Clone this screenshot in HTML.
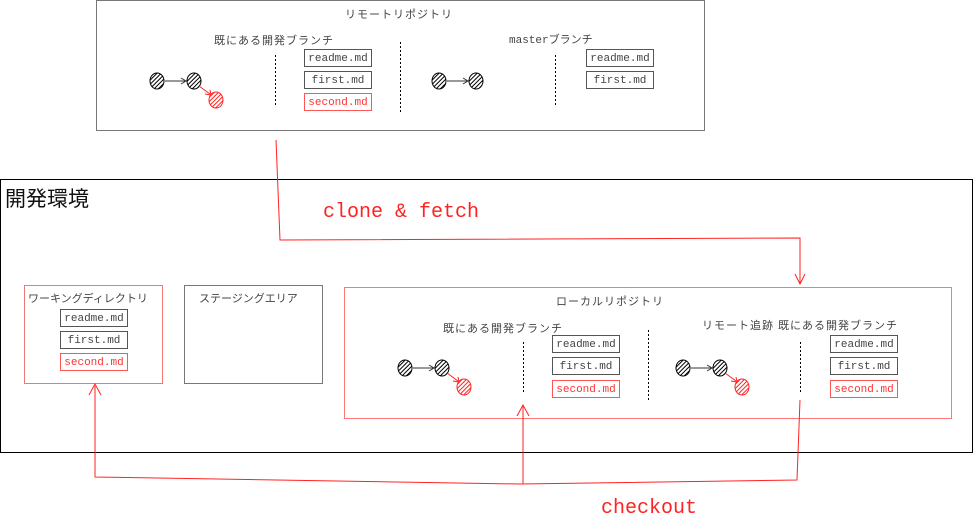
<!DOCTYPE html>
<html><head><meta charset="utf-8"><style>
body{margin:0;width:973px;height:522px;background:#fff;position:relative;overflow:hidden;font-family:"Liberation Sans","Noto Sans CJK JP",sans-serif;color:#444}
.a{position:absolute}
.box{position:absolute;box-sizing:border-box}
.f{position:absolute;width:68px;height:18px;box-sizing:border-box;border:1px solid #555;font:11px "Liberation Mono",monospace;text-align:center;line-height:18px;color:#444}
.r{border-color:#f55;color:#f33}
.t{position:absolute;font-size:11px;white-space:nowrap;color:#444;letter-spacing:1px}
</style></head><body>
<div class="box" style="left:96px;top:0;width:609px;height:131px;border:1px solid #777"></div>
<div class="t" style="left:345px;top:6px">リモートリポジトリ</div>
<div class="t" style="left:214px;top:32px">既にある開発ブランチ</div>
<div class="t" style="left:509px;top:31px;font-family:'Liberation Mono','Noto Sans CJK JP',monospace;letter-spacing:0">masterブランチ</div>
<div class="f" style="left:304px;top:49px">readme.md</div>
<div class="f" style="left:304px;top:71px">first.md</div>
<div class="f r" style="left:304px;top:93px">second.md</div>
<div class="f" style="left:586px;top:49px">readme.md</div>
<div class="f" style="left:586px;top:71px">first.md</div>

<div class="box" style="left:0;top:179px;width:973px;height:274px;border:1px solid #000"></div>
<div class="a" style="left:5px;top:183px;font-size:21px;color:#111">開発環境</div>

<div class="box" style="left:24px;top:285px;width:139px;height:99px;border:1px solid #e77"></div>
<div class="t" style="left:28px;top:290px;letter-spacing:0">ワーキングディレクトリ</div>
<div class="f" style="left:60px;top:309px">readme.md</div>
<div class="f" style="left:60px;top:331px">first.md</div>
<div class="f r" style="left:60px;top:353px">second.md</div>

<div class="box" style="left:184px;top:285px;width:139px;height:99px;border:1px solid #777"></div>
<div class="t" style="left:199px;top:290px;letter-spacing:0">ステージングエリア</div>

<div class="box" style="left:344px;top:287px;width:608px;height:132px;border:1px solid #f77"></div>
<div class="t" style="left:556px;top:293px">ローカルリポジトリ</div>
<div class="t" style="left:443px;top:320px">既にある開発ブランチ</div>
<div class="t" style="left:702px;top:317px">リモート追跡 既にある開発ブランチ</div>
<div class="f" style="left:552px;top:335px">readme.md</div>
<div class="f" style="left:552px;top:357px">first.md</div>
<div class="f r" style="left:552px;top:380px">second.md</div>
<div class="f" style="left:830px;top:335px">readme.md</div>
<div class="f" style="left:830px;top:357px">first.md</div>
<div class="f r" style="left:830px;top:380px">second.md</div>

<div class="a" style="left:323px;top:201px;font:20px 'Liberation Mono',monospace;color:#f22">clone &amp; fetch</div>
<div class="a" style="left:601px;top:497px;font:20px 'Liberation Mono',monospace;color:#f22">checkout</div>

<svg class="a" style="left:0;top:0" width="973" height="522">
<defs>
<pattern id="h" width="3" height="3" patternUnits="userSpaceOnUse" patternTransform="rotate(45)"><rect width="3" height="3" fill="#fff"/><line x1="0" y1="0" x2="0" y2="3" stroke="#000" stroke-width="2"/></pattern>
<pattern id="hr" width="3" height="3" patternUnits="userSpaceOnUse" patternTransform="rotate(45)"><rect width="3" height="3" fill="#fff"/><line x1="0" y1="0" x2="0" y2="3" stroke="#f22" stroke-width="2"/></pattern>
<g id="cm">
<ellipse cx="0" cy="0" rx="7" ry="8" fill="url(#h)" stroke="#000"/>
<line x1="8" y1="0" x2="28" y2="0" stroke="#333"/><path d="M24 -3 L29 0 L24 3" fill="none" stroke="#333"/>
<ellipse cx="37" cy="0" rx="7" ry="8" fill="url(#h)" stroke="#000"/>
<line x1="42" y1="5" x2="53" y2="13" stroke="#f22"/><path d="M48 13 L54 14 L53 9" fill="none" stroke="#f22"/>
<ellipse cx="59" cy="19" rx="7" ry="8" fill="url(#hr)" stroke="#f22"/>
</g>
<g id="cm2">
<ellipse cx="0" cy="0" rx="7" ry="8" fill="url(#h)" stroke="#000"/>
<line x1="8" y1="0" x2="28" y2="0" stroke="#333"/><path d="M24 -3 L29 0 L24 3" fill="none" stroke="#333"/>
<ellipse cx="37" cy="0" rx="7" ry="8" fill="url(#h)" stroke="#000"/>
</g>
</defs>
<use href="#cm" x="157" y="81"/>
<use href="#cm2" x="439" y="81"/>
<use href="#cm" x="405" y="368"/>
<use href="#cm" x="683" y="368"/>
<g stroke="#000" stroke-dasharray="2,2">
<line x1="275.5" y1="55" x2="275.5" y2="105"/>
<line x1="400.5" y1="42" x2="400.5" y2="113"/>
<line x1="555.5" y1="55" x2="555.5" y2="105"/>
<line x1="523.5" y1="342" x2="523.5" y2="392"/>
<line x1="648.5" y1="330" x2="648.5" y2="400"/>
<line x1="800.5" y1="342" x2="800.5" y2="392"/>
</g>
<g fill="none" stroke="#f22" stroke-width="1">
<path d="M276 140 L280 240 L800 238 L800 283"/>
<path d="M795 274 L800 284 L805 274"/>
<path d="M95 386 L95 477 L520 484 L797 480 L800 400"/>
<path d="M89 395 L95 384 L101 395"/>
<path d="M523 484 L523 406"/>
<path d="M517 416 L523 405 L529 416"/>
</g>
</svg>
</body></html>
